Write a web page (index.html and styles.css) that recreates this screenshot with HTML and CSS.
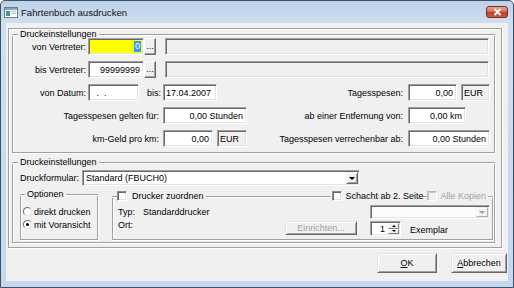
FILE: index.html
```html
<!DOCTYPE html>
<html lang="de">
<head>
    <meta charset="UTF-8">
    <title>Fahrtenbuch ausdrucken</title>
    <link rel="stylesheet" href="styles.css">
</head>
<body>
<div class="window">
    <div class="titlebar">
        <svg class="app-icon" width="14" height="11" viewBox="0 0 14 11">
            <rect x="0.5" y="0.5" width="13" height="10" fill="#fdfdfd" stroke="#707b86"/>
            <rect x="1" y="1" width="12" height="2" fill="#8aa6c4"/>
            <rect x="2" y="4" width="4" height="5" fill="#3f9b86"/>
            <rect x="7" y="4" width="5" height="1" fill="#b4c2d0"/>
            <rect x="7" y="6" width="5" height="1" fill="#b4c2d0"/>
        </svg>
        <span class="title">Fahrtenbuch ausdrucken</span>
        <div class="close-btn">
            <svg width="9" height="8" viewBox="0 0 9 8">
                <path d="M1.5 1 L7.5 7 M7.5 1 L1.5 7" stroke="#fff" stroke-width="1.8"/>
            </svg>
        </div>
    </div>

    <div class="client">
        <div class="panel">
            <!-- Bereich / Spesen -->
            <div class="group group-range">
                <div class="group-head">
                    <span class="line line-lead"></span>
                    <span class="caption">Druckeinstellungen</span>
                    <span class="line"></span>
                </div>
                <div class="rows">
                    <div class="row">
                        <span class="lbl lbl-short">von Vertreter:</span>
                        <span class="edit num edit-yellow w-vertreter"><span class="sel">0</span></span>
                        <span class="dots">...</span>
                        <span class="edit disabled w-name"></span>
                    </div>
                    <div class="row">
                        <span class="lbl lbl-short">bis Vertreter:</span>
                        <span class="edit num w-vertreter">99999999</span>
                        <span class="dots">...</span>
                        <span class="edit disabled w-name"></span>
                    </div>
                    <div class="row">
                        <span class="lbl lbl-short">von Datum:</span>
                        <span class="edit w-date-from">&nbsp;.&nbsp;&nbsp;.</span>
                        <span class="lbl lbl-bis">bis:</span>
                        <span class="edit w-date-to">17.04.2007</span>
                        <span class="lbl lbl-right">Tagesspesen:</span>
                        <span class="edit num w-spesen">0,00</span>
                        <span class="edit disabled unit w-eur">EUR</span>
                    </div>
                    <div class="row">
                        <span class="lbl lbl-long">Tagesspesen gelten für:</span>
                        <span class="edit num w-stunden">0,00 Stunden</span>
                        <span class="lbl lbl-right">ab einer Entfernung von:</span>
                        <span class="edit num w-km">0,00 km</span>
                    </div>
                    <div class="row">
                        <span class="lbl lbl-long">km-Geld pro km:</span>
                        <span class="edit num w-kmgeld">0,00</span>
                        <span class="edit disabled unit w-eur2">EUR</span>
                        <span class="lbl lbl-right">Tagesspesen verrechenbar ab:</span>
                        <span class="edit num w-verrechenbar">0,00 Stunden</span>
                    </div>
                </div>
            </div>

            <!-- Drucker -->
            <div class="group group-print">
                <div class="group-head">
                    <span class="line line-lead"></span>
                    <span class="caption">Druckeinstellungen</span>
                    <span class="line"></span>
                </div>
                <div class="form-row">
                    <span class="lbl-form">Druckformular:</span>
                    <span class="edit combo">
                        <span class="combo-text">Standard (FBUCH0)</span>
                        <span class="drop"><span class="arrow"></span></span>
                    </span>
                </div>
                <div class="sub-row">
                    <div class="group box-options">
                        <div class="group-head">
                            <span class="line line-lead-s"></span>
                            <span class="caption">Optionen</span>
                            <span class="line"></span>
                        </div>
                        <div class="radio-list">
                            <label class="radio-item"><span class="radio"></span>direkt drucken</label>
                            <label class="radio-item"><span class="radio checked"></span>mit Voransicht</label>
                        </div>
                    </div>
                    <div class="group box-printer">
                        <div class="group-head">
                            <span class="line line-lead-s"></span>
                            <span class="check-item check-first"><span class="check"></span>Drucker zuordnen</span>
                            <span class="line"></span>
                            <span class="check-item check-tray"><span class="check"></span>Schacht ab 2. Seite</span>
                            <span class="line line-gap"></span>
                            <span class="check-item check-copies disabled-text"><span class="check check-off"></span>Alle Kopien</span>
                            <span class="line line-end"></span>
                        </div>
                        <div class="printer-body">
                            <div class="printer-info">
                                <div class="info-line"><span class="info-key">Typ:</span>Standarddrucker</div>
                                <div class="info-line"><span class="info-key">Ort:</span></div>
                            </div>
                            <div class="printer-ctrl">
                                <span class="edit combo combo-off">
                                    <span class="combo-text"></span>
                                    <span class="drop"><span class="arrow arrow-off"></span></span>
                                </span>
                                <div class="ctrl-row">
                                    <span class="btn btn-setup">Einrichten...</span>
                                    <span class="edit spinner">
                                        <span class="spin-value">1</span>
                                        <span class="spin-btns">
                                            <span class="spin-up"><span class="tri-up"></span></span>
                                            <span class="spin-down"><span class="tri-down"></span></span>
                                        </span>
                                    </span>
                                    <span class="copies">Exemplar</span>
                                </div>
                            </div>
                        </div>
                    </div>
                </div>
            </div>
        </div>

        <div class="actions">
            <button class="btn btn-ok"><u>O</u>K</button>
            <button class="btn btn-cancel"><u>A</u>bbrechen</button>
        </div>
    </div>
</div>
</body>
</html>
```

FILE: styles.css
```css
* {
    box-sizing: border-box;
}

body {
    margin: 0;
    font-family: "Liberation Sans", Arial, sans-serif;
    font-size: 9px;
    color: #000;
    background: #fff;
}

.window {
    width: 514px;
    height: 288px;
    border: 1px solid #3f5066;
    border-radius: 5px 5px 0 0;
    background: linear-gradient(#bdd1ea, #d0dff0 22px, #c6d8ee);
    display: flex;
    flex-direction: column;
    overflow: hidden;
}

/* Titelleiste */
.titlebar {
    height: 22px;
    display: flex;
    align-items: center;
    padding: 0 5px 0 3px;
}

.app-icon {
    flex: none;
}

.title {
    margin-left: 3px;
    font-size: 9.6px;
    color: #111;
}

.close-btn {
    margin-left: auto;
    width: 22px;
    height: 12px;
    border: 1px solid #7a2e22;
    border-radius: 3px;
    background: linear-gradient(#e9a594, #d3705b 45%, #bb3f29 55%, #c9583f);
    display: flex;
    align-items: center;
    justify-content: center;
}

/* Client-Bereich */
.client {
    margin: 0 5px;
    height: 258px;
    background: #f0f0f0;
    padding: 5px 1px 0 2px;
}

.panel {
    width: 494px;
    height: 220px;
    border: 1px solid #a0a0a0;
    box-shadow: inset 1px 1px #fff, 1px 1px #fff;
    padding: 5px 0 0 3px;
}

/* Gruppenrahmen */
.group {
    display: flex;
    flex-direction: column;
    border: 1px solid #a0a0a0;
    border-top: 0;
    box-shadow: inset 1px 0 #fff, 1px 1px #fff;
}

.group-head {
    display: flex;
    align-items: center;
    height: 10px;
    margin: -5px -1px 0;
}

.line {
    flex: 1;
    align-self: flex-start;
    height: 2px;
    margin-top: 5px;
    border-top: 1px solid #a0a0a0;
    border-bottom: 1px solid #fff;
}

.line-lead {
    flex: 0 0 6px;
}

.line-lead-s {
    flex: 0 0 5px;
}

.line-gap {
    flex: 0 0 4px;
}

.line-end {
    flex: 0 0 5px;
}

.caption {
    line-height: 10px;
    padding: 0 2px;
    white-space: nowrap;
}

.group-range {
    width: 483px;
    height: 119px;
}

.group-print {
    width: 483px;
    height: 81px;
    margin-top: 9px;
}

.rows {
    display: flex;
    flex-direction: column;
    gap: 6px;
    margin-top: -1px;
    padding-right: 4px;
}

.row {
    display: flex;
    align-items: center;
    height: 17px;
}

.lbl {
    white-space: nowrap;
    text-align: right;
}

.lbl-short {
    width: 73px;
    margin-right: 2px;
}

.lbl-long {
    width: 146px;
    margin-right: 4px;
}

.lbl-bis {
    width: 12px;
    margin: 0 4px 0 8px;
}

.lbl-right {
    margin-left: auto;
    margin-right: 5px;
}

/* Eingabefelder */
.edit {
    height: 17px;
    display: flex;
    align-items: center;
    padding: 0 3px;
    white-space: nowrap;
    background: #fff;
    border: 1px solid;
    border-color: #a0a0a0 #fff #fff #a0a0a0;
    box-shadow: inset 1px 1px #696969, inset -1px -1px #e3e3e3;
}

.num {
    justify-content: flex-end;
}

.edit.disabled {
    background: #f0f0f0;
}

.edit-yellow {
    background: #ffff00;
    padding-right: 2px;
}

.sel {
    background: #3399ff;
    color: #fff;
    padding: 0 1px;
    line-height: 11px;
}

.unit {
    padding-left: 2px;
}

.w-vertreter { width: 56px; }
.w-name { width: 324px; margin-left: 9px; }
.w-date-from { width: 51px; padding-left: 5px; }
.w-date-to { width: 54px; padding-left: 2px; }
.w-spesen { width: 49px; }
.w-eur { width: 29px; margin-left: 4px; }
.w-stunden { width: 84px; }
.w-km { width: 58px; margin-right: 24px; }
.w-kmgeld { width: 50px; }
.w-eur2 { width: 30px; margin-left: 4px; }
.w-verrechenbar { width: 82px; }

.dots {
    width: 12px;
    height: 17px;
    display: flex;
    align-items: center;
    justify-content: center;
    padding-bottom: 2px;
    background: #f0f0f0;
    border: 1px solid;
    border-color: #fff #696969 #696969 #fff;
    box-shadow: inset -1px -1px #a0a0a0;
}

/* Druckformular */
.form-row {
    display: flex;
    align-items: center;
    height: 16px;
    margin-top: 3px;
    padding-left: 7px;
}

.lbl-form {
    width: 62px;
    white-space: nowrap;
}

.combo {
    width: 278px;
    height: 16px;
    padding: 1px 1px 1px 3px;
}

.combo-text {
    flex: 1;
}

.drop {
    width: 12px;
    height: 100%;
    display: flex;
    align-items: center;
    justify-content: center;
    background: #f0f0f0;
    border: 1px solid;
    border-color: #f0f0f0 #696969 #696969 #f0f0f0;
    box-shadow: inset 1px 1px #fff, inset -1px -1px #a0a0a0;
}

.arrow {
    width: 0;
    height: 0;
    border-left: 3px solid transparent;
    border-right: 3px solid transparent;
    border-top: 3px solid #000;
}

.arrow-off {
    border-top-color: #a0a0a0;
}

.sub-row {
    display: flex;
    align-items: flex-start;
    padding-left: 7px;
}

.box-options {
    width: 78px;
    height: 46px;
    margin-top: 8px;
}

.radio-list {
    display: flex;
    flex-direction: column;
    margin-top: 6px;
    padding-left: 2px;
}

.radio-item {
    display: flex;
    align-items: center;
    height: 13px;
    gap: 2px;
    white-space: nowrap;
}

.radio {
    width: 9px;
    height: 9px;
    border-radius: 50%;
    background: #fff;
    border: 1px solid;
    border-color: #6f6f6f #e3e3e3 #e3e3e3 #6f6f6f;
    display: flex;
    align-items: center;
    justify-content: center;
}

.radio.checked::after {
    content: "";
    width: 3px;
    height: 3px;
    border-radius: 50%;
    background: #000;
}

.box-printer {
    width: 381px;
    height: 44px;
    margin: 10px 0 0 14px;
}

.check-item {
    display: flex;
    align-items: center;
    gap: 3px;
    white-space: nowrap;
    line-height: 10px;
}

.check-first {
    gap: 5px;
    padding-right: 2px;
}

.check-tray {
    padding-left: 1px;
}

.check-copies {
    padding-right: 2px;
}

.check {
    width: 10px;
    height: 10px;
    background: #fff;
    border: 1px solid;
    border-color: #8c8c8c #fff #fff #8c8c8c;
    box-shadow: inset 1px 1px #6a6a6a, inset -1px -1px #e3e3e3;
}

.check-off {
    background: #f0f0f0;
    border-color: #b8b8b8 #fff #fff #b8b8b8;
    box-shadow: inset 1px 1px #c8c8c8;
}

.disabled-text {
    color: #a0a0a0;
}

.printer-body {
    display: flex;
    padding: 0 2px 0 5px;
}

.printer-info {
    margin-top: 4px;
}

.info-line {
    display: flex;
    align-items: center;
    height: 13px;
    white-space: nowrap;
}

.info-key {
    width: 25px;
}

.printer-ctrl {
    margin-left: auto;
    width: 205px;
    display: flex;
    flex-direction: column;
}

.combo-off {
    width: 120px;
    height: 14px;
    margin: 4px 0 0 85px;
    background: #fbfbfb;
}

.combo-off .drop {
    border-color: #f0f0f0 #b0b0b0 #b0b0b0 #f0f0f0;
    box-shadow: inset 1px 1px #fff;
}

.ctrl-row {
    display: flex;
    align-items: flex-start;
    margin-top: 2px;
}

/* Schaltflächen */
.btn {
    display: flex;
    align-items: center;
    justify-content: center;
    font: inherit;
    color: #000;
    background: #f0f0f0;
    border: 1px solid;
    border-color: #e3e3e3 #696969 #696969 #e3e3e3;
    box-shadow: inset 1px 1px #fff, inset -1px -1px #a0a0a0;
    padding: 0;
}

.btn-setup {
    width: 72px;
    height: 14px;
    color: #a0a0a0;
}

.spinner {
    width: 31px;
    height: 15px;
    margin-left: 13px;
    padding: 1px;
}

.spin-value {
    flex: 1;
    text-align: right;
    padding-right: 3px;
}

.spin-btns {
    width: 11px;
    height: 100%;
    display: flex;
    flex-direction: column;
}

.spin-up,
.spin-down {
    flex: 1;
    display: flex;
    align-items: center;
    justify-content: center;
    background: #f0f0f0;
    border: 1px solid;
    border-color: #fff #808080 #808080 #fff;
}

.tri-up {
    border-left: 2px solid transparent;
    border-right: 2px solid transparent;
    border-bottom: 2px solid #000;
}

.tri-down {
    border-left: 2px solid transparent;
    border-right: 2px solid transparent;
    border-top: 2px solid #000;
}

.copies {
    margin: 4px 0 0 9px;
    white-space: nowrap;
}

.actions {
    display: flex;
    justify-content: flex-end;
    margin-top: 5px;
}

.btn-ok {
    width: 60px;
    height: 20px;
    margin-right: 14px;
}

.btn-cancel {
    width: 56px;
    height: 20px;
}
```
